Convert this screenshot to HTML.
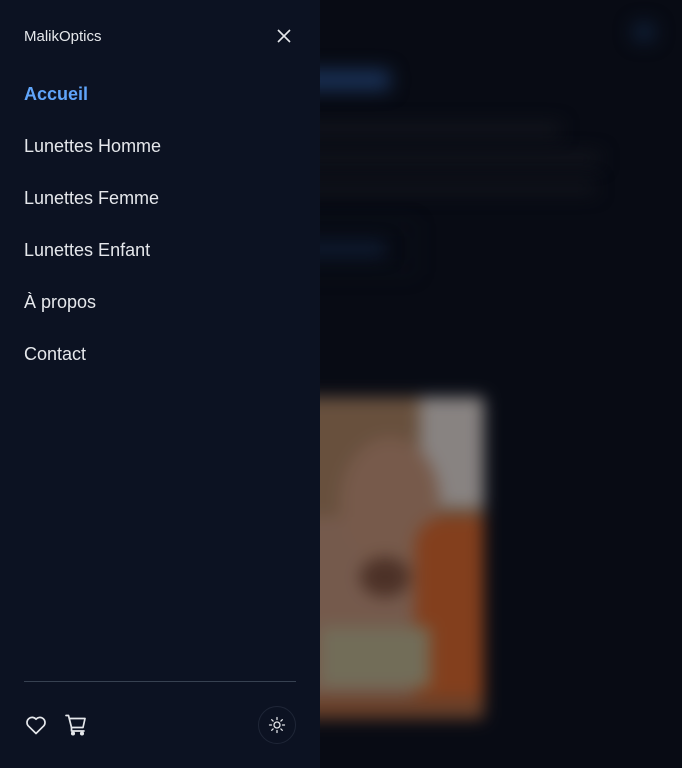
<!DOCTYPE html>
<html><head><meta charset="utf-8"><style>
*{margin:0;padding:0;box-sizing:border-box}
body{width:682px;height:768px;background:#080b14;position:relative;overflow:hidden;font-family:"Liberation Sans",sans-serif}
.bl{position:absolute;filter:blur(9px)}
.side{position:absolute;left:0;top:0;width:320px;height:768px;background:#0c1222}
.logo{position:absolute;left:24px;top:28px;font-size:15px;color:#e5e7eb}
.nav a{position:absolute;left:24px;font-size:18px;color:#e5e7eb;text-decoration:none}
.nav a.act{color:#60a5fa;font-weight:bold}
.hr{position:absolute;left:24px;top:681px;width:272px;height:1px;background:#374151}
</style></head><body>
<div class="bl" style="left:632px;top:22px;width:24px;height:20px;border-radius:50%;background:#102038"></div>
<div class="bl" style="left:300px;top:70px;width:90px;height:20px;background:#1a3258;border-radius:4px"></div>
<div class="bl" style="left:300px;top:124px;width:260px;height:12px;background:#15171e"></div>
<div class="bl" style="left:300px;top:153px;width:300px;height:12px;background:#14161d"></div>
<div class="bl" style="left:300px;top:181px;width:295px;height:12px;background:#13151c"></div>
<div class="bl" style="left:290px;top:222px;width:125px;height:52px;border:2px solid #10151f;border-radius:6px"></div>
<div class="bl" style="left:300px;top:243px;width:85px;height:12px;background:#11213a"></div>
<div style="position:absolute;left:300px;top:397px;width:184px;height:322px;overflow:hidden;filter:blur(8px) brightness(0.85);background:#8a6a5a;border-radius:4px">
 <div style="position:absolute;left:0;top:0;width:186px;height:120px;background:#7a5e48"></div>
 <div style="position:absolute;left:120px;top:0;width:66px;height:110px;background:#a09a98"></div>
 <div style="position:absolute;left:40px;top:40px;width:100px;height:130px;border-radius:50%;background:#8c6a58"></div>
 <div style="position:absolute;left:115px;top:120px;width:71px;height:210px;background:#9a4a22;border-radius:30px 0 0 30px"></div>
 <div style="position:absolute;left:20px;top:230px;width:110px;height:60px;background:#868068"></div>
 <div style="position:absolute;left:60px;top:160px;width:50px;height:40px;background:#5a3a2e;border-radius:50%"></div>
 <div style="position:absolute;left:0;top:300px;width:186px;height:30px;background:#7a4a30"></div>
</div>
<div class="side">
 <div class="logo">MalikOptics</div>
 <svg style="position:absolute;left:276px;top:28px" width="16" height="16" viewBox="0 0 16 16" stroke="#e5e7eb" stroke-width="1.6" fill="none"><path d="M2 2L14 14M14 2L2 14"/></svg>
 <div class="nav">
  <a class="act" style="top:84px">Accueil</a>
  <a style="top:136px">Lunettes Homme</a>
  <a style="top:188px">Lunettes Femme</a>
  <a style="top:240px">Lunettes Enfant</a>
  <a style="top:292px">À propos</a>
  <a style="top:344px">Contact</a>
 </div>
 <div class="hr"></div>
 <svg style="position:absolute;left:24px;top:713px" width="24" height="24" viewBox="0 0 24 24" fill="none" stroke="#e5e7eb" stroke-width="1.7" stroke-linejoin="round"><path d="M12 20.5L4.2 12.8A4.6 4.6 0 0 1 12 6.2a4.6 4.6 0 0 1 7.8 6.6Z"/></svg>
 <svg style="position:absolute;left:64px;top:713px" width="24" height="24" viewBox="0 0 24 24" fill="none" stroke="#e5e7eb" stroke-width="1.7" stroke-linejoin="round" stroke-linecap="round"><path d="M2 2.5h2.5l3 12h11.5l2-9H5.5"/><path d="M7.5 14.5v3.5h12.5"/><circle cx="9" cy="20.5" r="1.2" fill="#e5e7eb"/><circle cx="18" cy="20.5" r="1.2" fill="#e5e7eb"/></svg>
 <div style="position:absolute;left:258px;top:706px;width:38px;height:38px;border:1px solid #1f2637;border-radius:50%"></div>
 <svg style="position:absolute;left:268px;top:716px" width="18" height="18" viewBox="0 0 18 18" fill="none" stroke="#e5e7eb" stroke-width="1.3" stroke-linecap="round"><circle cx="9" cy="9" r="3"/><path d="M9 1.5v2M9 14.5v2M1.5 9h2M14.5 9h2M3.7 3.7l1.4 1.4M12.9 12.9l1.4 1.4M3.7 14.3l1.4-1.4M12.9 5.1l1.4-1.4"/></svg>
</div>
</body></html>
